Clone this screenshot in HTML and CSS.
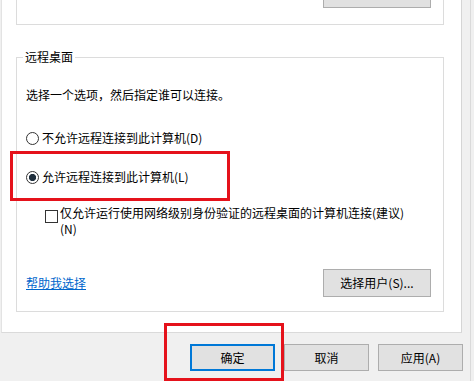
FILE: index.html
```html
<!DOCTYPE html>
<html lang="zh-CN">
<head>
<meta charset="utf-8">
<title>远程桌面</title>
<link rel="stylesheet" href="styles.css">
</head>
<body>
<div class="dialog">
  <div class="page">
    <div class="group group-top"><div class="btn-cut"></div></div>
    <fieldset class="group rd">
      <legend>远程桌面</legend>
      <p class="intro">选择一个选项，然后指定谁可以连接。</p>
      <label class="radio-row r1"><span class="radio"></span>不允许远程连接到此计算机(D)</label>
      <label class="radio-row r2"><span class="radio on"></span>允许远程连接到此计算机(L)</label>
      <label class="check-row"><span class="check"></span><span class="check-text">仅允许运行使用网络级别身份验证的远程桌面的计算机连接(建议)<br>(N)</span></label>
      <div class="bottom-row"><a class="link" href="#">帮助我选择</a><button class="btn btn-users">选择用户(S)...</button></div>
    </fieldset>
  </div>
  <div class="footer">
    <button class="btn btn-foot btn-default">确定</button>
    <button class="btn btn-foot">取消</button>
    <button class="btn btn-foot">应用(A)</button>
  </div>
  <div class="mark mark-radio"></div>
  <div class="mark mark-ok"></div>
</div>
</body>
</html>
```
FILE: styles.css
```css
* { box-sizing: border-box; }
html, body { margin: 0; padding: 0; }
body {
  background: #f0f0f0;
  font-family: "Noto Sans CJK SC", "Noto Sans", sans-serif;
  font-size: 12px;
  line-height: 16px;
  color: #000;
}
.dialog {
  position: relative;
  width: 471px;
  height: 381px;
  border-right: 1px solid #dadada;
  overflow: hidden;
}
.page {
  margin-left: 1px;
  width: 461px;
  height: 333px;
  background: #fff;
  border-left: 1px solid #e3e3e3;
  border-right: 1px solid #d5d5d5;
  border-bottom: 1px solid #dadada;
  padding: 0 17px 0 14px;
}
.group-top {
  height: 25px;
  border: 1px solid #dcdcdc;
  border-top: none;
  display: flex;
  justify-content: flex-end;
  padding-right: 12px;
}
.btn-cut {
  width: 108px;
  height: 8px;
  background: #e1e1e1;
  border: 1px solid #adadad;
  border-top: none;
}
.rd {
  margin: 24px 0 0;
  border: 1px solid #dcdcdc;
  padding: 0 12px 14px 9px;
  min-width: 0;
}
.rd legend {
  padding: 0 2px;
  margin-left: -3px;
  line-height: 16px;
}
.intro { margin: 22px 0 0; }
.radio-row {
  display: flex;
  align-items: center;
  height: 16px;
}
.r1 { margin-top: 27px; }
.r2 { margin-top: 23px; }
.radio {
  width: 13px;
  height: 13px;
  border: 1px solid #333;
  border-radius: 50%;
  background: #fff;
  margin-right: 3px;
  flex: none;
}
.radio.on {
  background: radial-gradient(circle, #1f2f3d 0, #1f2f3d 3.3px, #fff 3.9px);
}
.check-row {
  display: flex;
  align-items: flex-start;
  margin-top: 20px;
  padding-left: 19px;
}
.check {
  width: 13px;
  height: 13px;
  border: 1px solid #333;
  background: #fff;
  margin-top: 5px;
  margin-right: 2px;
  flex: none;
}
.bottom-row {
  display: flex;
  align-items: center;
  justify-content: space-between;
  margin-top: 32px;
}
.link {
  color: #0066cc;
  text-decoration: underline;
}
.btn {
  font: inherit;
  color: #000;
  background: #e1e1e1;
  border: 1px solid #adadad;
  padding: 0;
  margin: 0;
}
.btn-users {
  width: 108px;
  height: 28px;
}
.footer {
  display: flex;
  justify-content: flex-end;
  gap: 9px;
  padding: 11px 7px 0 0;
}
.btn-foot {
  width: 85px;
  height: 27px;
}
.btn-default {
  border: 2px solid #0078d7;
}
.mark {
  position: absolute;
  border: 3px solid #e5121b;
  pointer-events: none;
}
.mark-radio {
  left: 10px;
  top: 151px;
  width: 220px;
  height: 50px;
}
.mark-ok {
  left: 164px;
  top: 323px;
  width: 120px;
  height: 58px;
}
```
